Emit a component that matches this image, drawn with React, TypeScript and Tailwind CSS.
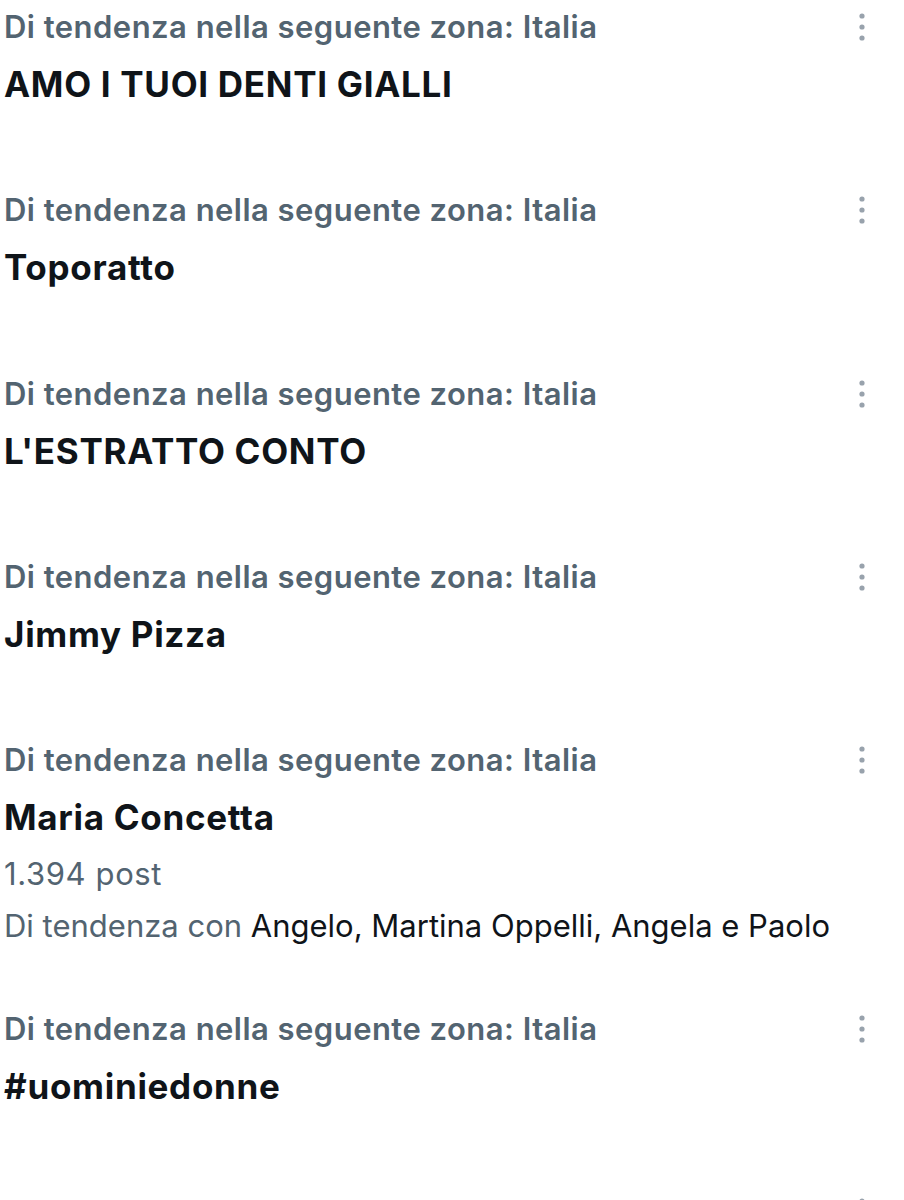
import React from 'react';

type Trend = {
  name: string;
  posts?: string;
  related?: string;
  partial?: boolean;
};

const trends: Trend[] = [
  { name: 'AMO I TUOI DENTI GIALLI' },
  { name: 'Toporatto' },
  { name: "L'ESTRATTO CONTO" },
  { name: 'Jimmy Pizza' },
  { name: 'Maria Concetta', posts: '1.394 post', related: 'Angelo, Martina Oppelli, Angela e Paolo' },
  { name: '#uominiedonne' },
  { name: '', partial: true },
];

function MoreIcon() {
  return (
    <svg viewBox="0 0 20 40" className="h-10 w-5 text-[#98a2ac]" aria-hidden="true">
      <circle cx="10" cy="9" r="2.6" fill="currentColor" />
      <circle cx="10" cy="20" r="2.6" fill="currentColor" />
      <circle cx="10" cy="31" r="2.6" fill="currentColor" />
    </svg>
  );
}

function TrendItem({ trend }: { trend: Trend }) {
  const hasExtra = !!trend.posts;
  return (
    <div className={`flex flex-col pt-[7px] ${hasExtra ? 'pb-[54px]' : 'pb-[77.3px]'}`}>
      <div className="flex h-10 items-center justify-between pr-[32px]">
        <span className="text-[31px] font-semibold leading-10 tracking-[0.015em] text-[#536471]">
          {trend.partial ? '' : 'Di tendenza nella seguente zona: Italia'}
        </span>
        <MoreIcon />
      </div>
      {!trend.partial && (
        <div className="mt-[15px] h-11 text-[35px] font-bold leading-[44px] tracking-[0.02em] text-[#0f1419]">
          {trend.name}
        </div>
      )}
      {trend.posts && (
        <div className="mt-[13px] h-11 text-[31px] leading-[44px] tracking-[0.02em] text-[#536471]">{trend.posts}</div>
      )}
      {trend.related && (
        <div className="mt-2 h-11 text-[31px] leading-[44px] text-[#536471]">
          Di tendenza con <span className="text-[#0f1419]">{trend.related}</span>
        </div>
      )}
    </div>
  );
}

export default function App() {
  return (
    <div className="h-[1200px] w-[904px] overflow-hidden bg-white pl-[4px] font-['Inter',sans-serif]">
      {trends.map((t, i) => (
        <TrendItem key={i} trend={t} />
      ))}
    </div>
  );
}
